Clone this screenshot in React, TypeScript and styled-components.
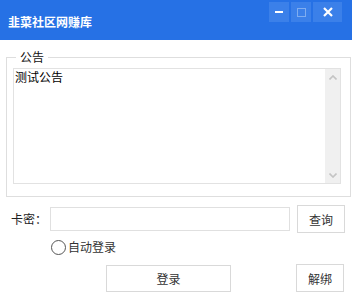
import React from 'react';
import styled, { createGlobalStyle } from 'styled-components';

const GlobalStyle = createGlobalStyle`
  html, body {
    margin: 0;
    padding: 0;
    background: #ffffff;
  }
  body {
    font-family: "Noto Sans CJK SC", "Noto Sans", sans-serif;
    font-size: 12px;
    color: #222;
  }
`;

const Window = styled.div`
  width: 352px;
  height: 296px;
  display: flex;
  flex-direction: column;
  background: #fff;
  overflow: hidden;
`;

const TitleBar = styled.div`
  height: 40px;
  flex-shrink: 0;
  display: flex;
  align-items: flex-start;
  background: #2671e5;
`;

const Title = styled.div`
  margin: 14px 0 0 8px;
  font-size: 12px;
  line-height: 16px;
  font-weight: 700;
  color: #fff;
`;

const Controls = styled.div`
  margin: 2px 10px 0 auto;
  display: flex;
  gap: 2px;
`;

const CtrlButton = styled.div<{ $w: number }>`
  width: ${(p) => p.$w}px;
  height: 20px;
  background: #3b80e9;
  display: flex;
  align-items: center;
  justify-content: center;
`;

const Group = styled.fieldset`
  margin: 9px 1px 0 6px;
  padding: 3px 9px 12px 6px;
  border: 1px solid #dedede;
  min-width: 0;
`;

const Legend = styled.legend`
  margin-left: 3px;
  padding: 0 4px;
  font-size: 12px;
  line-height: 16px;
  color: #111;
`;

const NoticeBox = styled.div`
  height: 114px;
  border: 1px solid #e2e2e2;
  display: flex;
`;

const NoticeText = styled.div`
  flex: 1;
  padding: 0 0 0 1px;
  font-size: 12px;
  line-height: 16px;
  color: #000;
`;

const ScrollTrack = styled.div`
  width: 15px;
  background: #f0f0f0;
  display: flex;
  flex-direction: column;
  justify-content: space-between;
  align-items: center;
  padding: 6px 0 5px;
`;

const Row = styled.div<{ $top: number }>`
  margin-top: ${(p) => p.$top}px;
  display: flex;
  align-items: center;
`;

const Label = styled.div`
  width: 39px;
  margin-left: 11px;
  font-size: 12px;
  line-height: 16px;
  color: #222;
`;

const CardInput = styled.input`
  width: 240px;
  height: 24px;
  box-sizing: border-box;
  border: 1px solid #e0e0e0;
  outline: none;
  padding: 0 4px;
  font: inherit;
`;

const Button = styled.button<{ $w: number; $left: number }>`
  width: ${(p) => p.$w}px;
  height: ${(p) => (p.$w > 60 ? 27 : 28)}px;
  margin-left: ${(p) => p.$left}px;
  padding: 0;
  box-sizing: border-box;
  border: 1px solid #d9d9d9;
  background: #fff;
  font-family: inherit;
  font-size: 12px;
  color: #333;
  cursor: pointer;
`;

const RadioLabel = styled.label`
  margin-left: 51px;
  display: flex;
  align-items: center;
  gap: 2px;
  font-size: 12px;
  line-height: 16px;
  color: #333;
`;

const RadioCircle = styled.span`
  width: 15px;
  height: 15px;
  box-sizing: border-box;
  border: 1.5px solid #555;
  border-radius: 50%;
`;

const Chevron = ({ up }: { up?: boolean }) => (
  <svg width="8" height="5" viewBox="0 0 8 5">
    <path
      d={up ? 'M0.5 4.5 L4 1 L7.5 4.5' : 'M0.5 0.5 L4 4 L7.5 0.5'}
      fill="none"
      stroke="#c4c4c4"
      strokeWidth="1.6"
    />
  </svg>
);

export default function App() {
  return (
    <Window>
      <GlobalStyle />
      <TitleBar>
        <Title>韭菜社区网赚库</Title>
        <Controls>
          <CtrlButton $w={20}>
            <svg width="8" height="2" viewBox="0 0 8 2">
              <rect width="8" height="2" fill="#fff" />
            </svg>
          </CtrlButton>
          <CtrlButton $w={20}>
            <svg width="9" height="9" viewBox="0 0 9 9">
              <rect x="0.5" y="0.5" width="8" height="8" fill="none" stroke="#7fadf0" />
            </svg>
          </CtrlButton>
          <CtrlButton $w={29}>
            <svg width="10" height="10" viewBox="0 0 10 10">
              <path d="M1 1 L9 9 M9 1 L1 9" stroke="#fff" strokeWidth="2.2" />
            </svg>
          </CtrlButton>
        </Controls>
      </TitleBar>

      <Group>
        <Legend>公告</Legend>
        <NoticeBox>
          <NoticeText>测试公告</NoticeText>
          <ScrollTrack>
            <Chevron up />
            <Chevron />
          </ScrollTrack>
        </NoticeBox>
      </Group>

      <Row $top={8}>
        <Label>卡密：</Label>
        <CardInput />
        <Button $w={48} $left={7}>
          查询
        </Button>
      </Row>

      <Row $top={6}>
        <RadioLabel>
          <RadioCircle />
          自动登录
        </RadioLabel>
      </Row>

      <Row $top={9}>
        <Button $w={125} $left={106}>
          登录
        </Button>
        <Button $w={48} $left={65}>
          解绑
        </Button>
      </Row>
    </Window>
  );
}
